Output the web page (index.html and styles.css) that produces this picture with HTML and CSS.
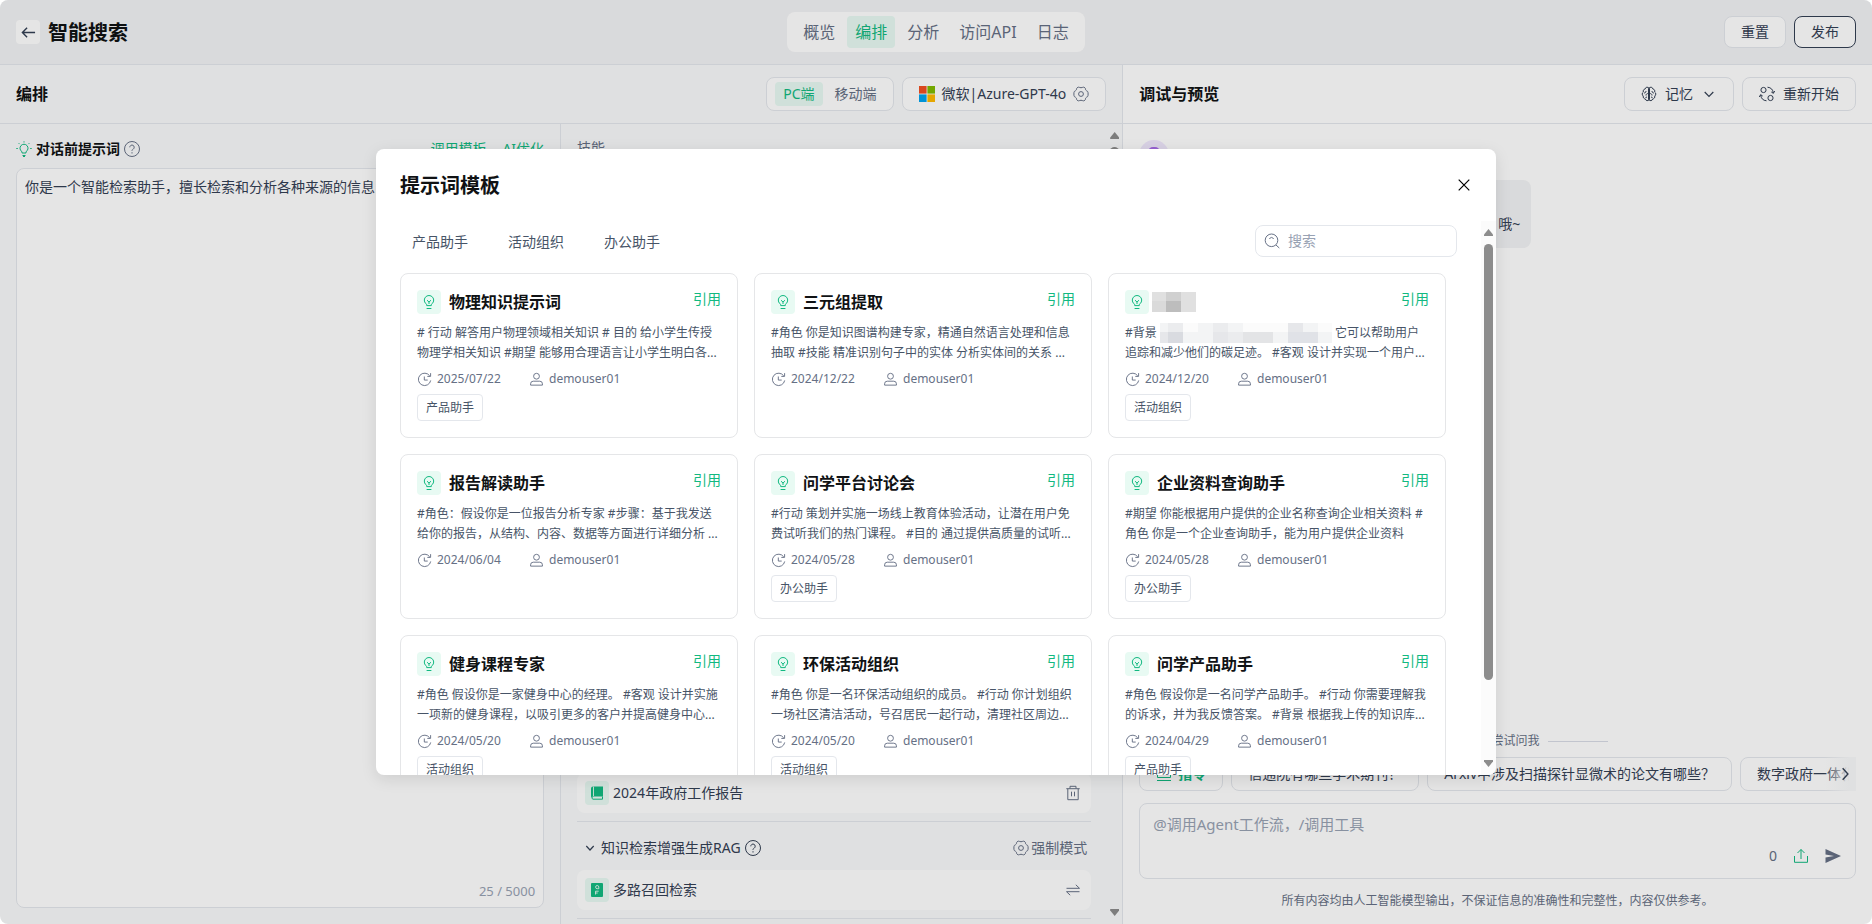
FILE: index.html
```html
<!DOCTYPE html>
<html lang="zh-CN">
<head>
<meta charset="utf-8">
<meta name="viewport" content="width=device-width, initial-scale=1">
<title>智能搜索</title>
<link rel="stylesheet" href="styles.css">
</head>
<body>
<svg class="sprite" aria-hidden="true">
  <symbol id="i-bulb" viewBox="0 0 24 24"><path d="M9.7 15.6v-1.3a4.7 4.7 0 1 1 4.6 0v1.3zM9.6 18.5h4.8M10 10.2l2 1.8 2-1.8M12 12v2"/></symbol>
  <symbol id="i-clock" viewBox="0 0 16 16"><path d="M13.600 4.200A6.600 6.600 0 1 0 14.600 9M14.500 1.200v3.500h-3.500M7.800 4.800v3.800h3.600"/></symbol>
  <symbol id="i-user" viewBox="0 0 16 16"><circle cx="8" cy="4.500" r="3.100"/><path d="M1.700 14v-1.400a2.800 2.800 0 0 1 2.800-2.800h7a2.800 2.800 0 0 1 2.800 2.800V14z"/></symbol>
  <symbol id="i-help" viewBox="0 0 16 16"><circle cx="8" cy="8" r="7.500"/><path d="M5.800 6.300a2.200 2.200 0 1 1 3.400 1.800C8.300 8.700 8 9 8 9.900M8 11.200v1.300"/></symbol>
  <symbol id="i-gear" viewBox="0 0 16 16"><path d="M5 1.300c.9-.5 1.400.4 3 .4s2.100-.9 3-.4l1 .6c.8.500.3 1.400.7 2.100s1.300.9 1.900 1.400c.7.600.7 4.600 0 5.200-.6.500-1.500.7-1.900 1.400s.1 1.600-.7 2.100l-1 .6c-.9.500-1.400-.4-3-.4s-2.100.9-3 .4l-1-.6c-.8-.5-.3-1.400-.7-2.100S2 11.100 1.400 10.600c-.7-.6-.7-4.600 0-5.200C2 4.900 2.900 4.700 3.300 4s-.1-1.600.7-2.100z"/><circle cx="8" cy="8" r="2.400"/></symbol>
</svg>

<div class="app">
  <header class="topbar">
    <div class="topbar-side">
      <button class="back" aria-label="返回"><svg viewBox="0 0 16 16"><path d="M15 8H1.500M6.500 3 1.500 8l5 5"/></svg></button>
      <h1>智能搜索</h1>
    </div>
    <nav class="tabs">
      <a href="#">概览</a><a href="#" class="on">编排</a><a href="#">分析</a><a href="#">访问API</a><a href="#">日志</a>
    </nav>
    <div class="topbar-side end">
      <button class="btn">重置</button>
      <button class="btn strong">发布</button>
    </div>
  </header>

  <main class="work">
    <section class="arrange">
      <div class="subbar">
        <h2>编排</h2>
        <div class="subbar-tools">
          <div class="seg"><button class="on">PC端</button><button>移动端</button></div>
          <button class="btn tall model">
            <svg class="ms" viewBox="0 0 16 16"><path fill="#f25022" d="M0 0h7.600v7.600H0z"/><path fill="#7fba00" d="M8.400 0H16v7.600H8.400z"/><path fill="#00a4ef" d="M0 8.400h7.600V16H0z"/><path fill="#ffb900" d="M8.400 8.400H16V16H8.400z"/></svg>
            <span>微软|Azure-GPT-4o</span>
            <svg class="ic muted"><use href="#i-gear"/></svg>
          </button>
        </div>
      </div>
      <div class="columns">
        <div class="prompt">
          <div class="prompt-head">
            <svg class="ic green" viewBox="0 0 16 16"><path d="M6 12v-1.300a4 4 0 1 1 4 0V12zM6.500 14.500h3M8 .3v1.200M2.700 2.200l.9.900M13.300 2.200l-.9.900M.3 7.500h1.500M15.700 7.500h-1.500M7 15.500h2"/></svg>
            <label for="prompt">对话前提示词</label>
            <svg class="ic muted"><use href="#i-help"/></svg>
            <span class="prompt-links"><a href="#">调用模板</a><a href="#">AI优化</a></span>
          </div>
          <div class="prompt-box">
            <textarea id="prompt">你是一个智能检索助手，擅长检索和分析各种来源的信息</textarea>
            <span class="count">25 / 5000</span>
          </div>
        </div>
        <div class="skills">
          <div class="skills-body">
            <div class="skills-title">技能</div>
            <div class="skills-list">
              <div class="skill">
                <span class="tile"><svg viewBox="0 0 24 24"><path fill="#12b981" d="M8 5.500h10v10H8A1.700 1.700 0 0 0 6 17V7.500a2 2 0 0 1 2-2z"/><path fill="none" stroke="#12b981" d="M17.500 15.500v2.700H8a1.400 1.400 0 0 1 0-2.700"/><path stroke="#d5f3e7" d="M8.500 5.500v9.500"/></svg></span>
                <span>2024年政府工作报告</span>
                <button class="plain" aria-label="删除"><svg class="ic muted" viewBox="0 0 16 16"><path d="M1.300 3.700h13.400M5 3.500V1.300h6v2.200M2.800 3.900v10.800h10.400V3.900M6.500 6.700v4.600M9.500 6.700v4.600"/></svg></button>
              </div>
              <div class="group">
                <svg class="ic small" viewBox="0 0 10 10"><path d="m1.300 3 3.700 4 3.700-4"/></svg>
                <span>知识检索增强生成RAG</span>
                <svg class="ic"><use href="#i-help"/></svg>
                <button class="plain mode"><svg class="ic muted"><use href="#i-gear"/></svg>强制模式</button>
              </div>
              <div class="skill">
                <span class="tile"><svg viewBox="0 0 24 24"><rect x="6" y="5" width="12" height="14" rx="1" fill="#12b981"/><path fill="none" stroke="#d5f3e7" d="M13.800 10.800V9a1.600 1.600 0 1 0-1.600 1.700h1.600M10.500 16.500v-3.300h3.200M10.500 15h2.200"/></svg></span>
                <span>多路召回检索</span>
                <button class="plain" aria-label="切换"><svg class="ic muted" viewBox="0 0 16 16"><path d="M1.500 6.300h13L10.800 2.800M14.500 9.700h-13l3.700 3.500"/></svg></button>
              </div>
            </div>
          </div>
          <div class="scroll" aria-hidden="true"><i class="up"></i><i class="thumb"></i><i class="down"></i></div>
        </div>
      </div>
    </section>

    <section class="preview">
      <div class="subbar">
        <h2>调试与预览</h2>
        <div class="subbar-tools">
          <button class="btn tall">
            <svg class="ic" viewBox="0 0 16 16"><path d="M8 2.200C6.800.6 4.500 1 4.200 2.900 2.500 3.200 1.800 4.900 2.400 6 .8 6.900.8 9.200 2.300 10c-.5 1.500.5 2.800 2 2.900.4 2 2.700 2.300 3.700.9 1 1.400 3.300 1.100 3.700-.9 1.500-.1 2.500-1.400 2-2.900 1.500-.8 1.500-3.100-.1-4 .6-1.100-.1-2.800-1.800-3.100C11.500 1 9.200.6 8 2.200zM7.500 2.200v11.600M8.500 2.200v11.600M5 5c0 1.500-1 2-2 2M11 5c0 1.500 1 2 2 2M7.500 7.500c-1.500 0-2.500.5-2.500 2M8.500 7.500c1.500 0 2.500.5 2.500 2M4.500 11.500l1.500-.5M11.500 11.500 10 11"/></svg>
            <span>记忆</span>
            <svg class="ic small gap" viewBox="0 0 10 10"><path d="m.7 3 4.300 4.300L9.300 3"/></svg>
          </button>
          <button class="btn tall">
            <svg class="ic" viewBox="0 0 16 16"><circle cx="4.500" cy="4" r="2.600"/><circle cx="11.500" cy="12" r="2.600"/><path d="M8.500 1.200a6.500 6.500 0 0 1 5.800 5.900M12.300 6l2.100 1.300L15.700 5M7.500 14.800a6.500 6.500 0 0 1-5.800-5.900M3.700 10 1.600 8.700.3 11"/></svg>
            <span>重新开始</span>
          </button>
        </div>
      </div>
      <div class="chat">
        <div class="avatar"><svg viewBox="0 0 30 30"><rect x="9" y="7" width="12" height="14" rx="5" fill="#a86be8"/></svg></div>
        <div class="bubble">哦~</div>
        <div class="ask">您可以尝试问我</div>
        <div class="chips">
          <button class="chip cmd"><svg class="ic" viewBox="0 0 16 16"><path d="M1.500 1.500h13v10h-13zM1 14.500h14M6 4.500l-2 2 2 2M10 4.500l2 2-2 2M8.500 4l-1 5"/></svg>指令</button>
          <button class="chip">信通院有哪些学术期刊？</button>
          <button class="chip">Arxiv中涉及扫描探针显微术的论文有哪些？</button>
          <button class="chip">数字政府一体化</button>
          <button class="more" aria-label="更多"><svg class="ic small" viewBox="0 0 10 12"><path d="m3 1 4.500 5L3 11"/></svg></button>
        </div>
        <div class="composer">
          <textarea aria-label="输入" placeholder="@调用Agent工作流，/调用工具"></textarea>
          <div class="composer-tools">
            <span>0</span>
            <button class="plain" aria-label="上传"><svg class="ic green" viewBox="0 0 16 16"><path d="M1.500 8v6.300h13V8M8 11V1.500M4.500 5 8 1.500 11.500 5"/></svg></button>
            <button class="plain" aria-label="发送"><svg class="send" viewBox="0 0 16 16"><path d="M.5 1 16 8 .5 15V9.600L9 8 .5 6.400z"/></svg></button>
          </div>
        </div>
        <p class="notice">所有内容均由人工智能模型输出，不保证信息的准确性和完整性，内容仅供参考。</p>
      </div>
    </section>
  </main>

  <div class="overlay">
    <div class="modal" role="dialog" aria-labelledby="dlg-title">
      <div class="modal-head">
        <h2 id="dlg-title">提示词模板</h2>
        <button class="plain" aria-label="关闭"><svg class="close" viewBox="0 0 12 12"><path d="m.7.700 10.600 10.600M11.300.7.700 11.300"/></svg></button>
      </div>
      <div class="modal-main">
        <div class="modal-body">
          <div class="filter">
            <nav class="cats"><a href="#">产品助手</a><a href="#">活动组织</a><a href="#">办公助手</a></nav>
            <label class="search"><svg class="ic muted" viewBox="0 0 16 16"><circle cx="7.500" cy="7.300" r="6.300"/><path d="m12 12 3.300 3M5.300 5.600a3 3 0 0 1 4.400 0"/></svg><input type="text" placeholder="搜索" aria-label="搜索"></label>
          </div>
          <div class="cards">
            <article class="card">
              <div class="card-head"><span class="tile"><svg><use href="#i-bulb"/></svg></span><h3>物理知识提示词</h3><a href="#">引用</a></div>
              <p># 行动 解答用户物理领域相关知识 # 目的 给小学生传授物理学相关知识 #期望 能够用合理语言让小学生明白各...</p>
              <div class="meta"><span><svg><use href="#i-clock"/></svg>2025/07/22</span><span><svg><use href="#i-user"/></svg>demouser01</span></div>
              <span class="tag">产品助手</span>
            </article>
            <article class="card">
              <div class="card-head"><span class="tile"><svg><use href="#i-bulb"/></svg></span><h3>三元组提取</h3><a href="#">引用</a></div>
              <p>#角色 你是知识图谱构建专家，精通自然语言处理和信息抽取 #技能 精准识别句子中的实体 分析实体间的关系 ...</p>
              <div class="meta"><span><svg><use href="#i-clock"/></svg>2024/12/22</span><span><svg><use href="#i-user"/></svg>demouser01</span></div>
            </article>
            <article class="card">
              <div class="card-head masked"><span class="tile"><svg><use href="#i-bulb"/></svg></span>
                <svg class="mask-title" viewBox="0 0 44 20" shape-rendering="crispEdges"><path fill="#e0e0e0" d="M0 0h44v20H0z"/><path fill="#dadada" d="M0 9h14v11H0z"/><path fill="#d0d0d0" d="M14 0h15v9H14z"/><path fill="#bdbdbd" d="M14 9h15v11H14z"/></svg>
                <a href="#">引用</a></div>
              <p>#背景 <svg class="mask-text" viewBox="0 0 172 20" shape-rendering="crispEdges"><path fill="#f3f4f5" d="M0 0h172v20H0z"/><path fill="#e6e7ea" d="M0 9h8v11H0zM53 9h15v11H53zM128 0h15v9h-15z"/><path fill="#d9dbe0" d="M8 9h15v11H8z"/><path fill="#ebecee" d="M8 0h15v9H8zM53 0h15v9H53zM68 9h15v11H68z"/><path fill="#fbfbfb" d="M23 0h15v9H23zM83 0h45v9H83zM158 0h14v9h-14z"/><path fill="#e3e4e6" d="M83 9h30v11H83z"/><path fill="#e0e2e7" d="M128 9h30v11h-30z"/></svg> 它可以帮助用户追踪和减少他们的碳足迹。 #客观 设计并实现一个用户...</p>
              <div class="meta"><span><svg><use href="#i-clock"/></svg>2024/12/20</span><span><svg><use href="#i-user"/></svg>demouser01</span></div>
              <span class="tag">活动组织</span>
            </article>
            <article class="card">
              <div class="card-head"><span class="tile"><svg><use href="#i-bulb"/></svg></span><h3>报告解读助手</h3><a href="#">引用</a></div>
              <p>#角色：假设你是一位报告分析专家 #步骤：基于我发送给你的报告，从结构、内容、数据等方面进行详细分析 ...</p>
              <div class="meta"><span><svg><use href="#i-clock"/></svg>2024/06/04</span><span><svg><use href="#i-user"/></svg>demouser01</span></div>
            </article>
            <article class="card">
              <div class="card-head"><span class="tile"><svg><use href="#i-bulb"/></svg></span><h3>问学平台讨论会</h3><a href="#">引用</a></div>
              <p>#行动 策划并实施一场线上教育体验活动，让潜在用户免费试听我们的热门课程。 #目的 通过提供高质量的试听...</p>
              <div class="meta"><span><svg><use href="#i-clock"/></svg>2024/05/28</span><span><svg><use href="#i-user"/></svg>demouser01</span></div>
              <span class="tag">办公助手</span>
            </article>
            <article class="card">
              <div class="card-head"><span class="tile"><svg><use href="#i-bulb"/></svg></span><h3>企业资料查询助手</h3><a href="#">引用</a></div>
              <p>#期望 你能根据用户提供的企业名称查询企业相关资料 #角色 你是一个企业查询助手，能为用户提供企业资料</p>
              <div class="meta"><span><svg><use href="#i-clock"/></svg>2024/05/28</span><span><svg><use href="#i-user"/></svg>demouser01</span></div>
              <span class="tag">办公助手</span>
            </article>
            <article class="card">
              <div class="card-head"><span class="tile"><svg><use href="#i-bulb"/></svg></span><h3>健身课程专家</h3><a href="#">引用</a></div>
              <p>#角色 假设你是一家健身中心的经理。 #客观 设计并实施一项新的健身课程，以吸引更多的客户并提高健身中心...</p>
              <div class="meta"><span><svg><use href="#i-clock"/></svg>2024/05/20</span><span><svg><use href="#i-user"/></svg>demouser01</span></div>
              <span class="tag">活动组织</span>
            </article>
            <article class="card">
              <div class="card-head"><span class="tile"><svg><use href="#i-bulb"/></svg></span><h3>环保活动组织</h3><a href="#">引用</a></div>
              <p>#角色 你是一名环保活动组织的成员。 #行动 你计划组织一场社区清洁活动，号召居民一起行动，清理社区周边...</p>
              <div class="meta"><span><svg><use href="#i-clock"/></svg>2024/05/20</span><span><svg><use href="#i-user"/></svg>demouser01</span></div>
              <span class="tag">活动组织</span>
            </article>
            <article class="card">
              <div class="card-head"><span class="tile"><svg><use href="#i-bulb"/></svg></span><h3>问学产品助手</h3><a href="#">引用</a></div>
              <p>#角色 假设你是一名问学产品助手。 #行动 你需要理解我的诉求，并为我反馈答案。 #背景 根据我上传的知识库...</p>
              <div class="meta"><span><svg><use href="#i-clock"/></svg>2024/04/29</span><span><svg><use href="#i-user"/></svg>demouser01</span></div>
              <span class="tag">产品助手</span>
            </article>
          </div>
        </div>
        <div class="scroll light" aria-hidden="true"><i class="up"></i><i class="thumb"></i><i class="down"></i></div>
      </div>
    </div>
  </div>
</div>
</body>
</html>
```
FILE: styles.css
```css
:root {
  --green: #12b981;
  --green-soft: #e8faf3;
  --ink: #101214;
  --text: #344054;
  --soft: #475467;
  --muted: #667085;
  --faint: #98a2b3;
  --line: #e4e7ec;
}

* { box-sizing: border-box; }

body {
  margin: 0;
  background: #fff;
  color: var(--text);
  font: 14px/20px "Noto Sans", "Noto Sans CJK SC", sans-serif;
}

h1, h2, h3, p { margin: 0; color: var(--ink); }
h1 { font-size: 20px; line-height: 28px; }
h2 { font-size: 16px; line-height: 24px; }
a { color: inherit; text-decoration: none; }
button, input, textarea { font: inherit; color: inherit; }
button { cursor: pointer; }

.sprite { position: absolute; width: 0; height: 0; }

.ic {
  width: 16px;
  height: 16px;
  flex: none;
  fill: none;
  stroke: currentColor;
}
.ic.small { width: 10px; height: 12px; stroke-width: 1.2; }
.ic.muted { color: var(--muted); }
.ic.green { color: var(--green); }

.plain { display: flex; align-items: center; padding: 0; border: 0; background: none; }

.app {
  position: relative;
  display: flex;
  flex-direction: column;
  height: 100vh;
  border-radius: 8px;
  overflow: hidden;
  background: #f9fafb;
}

/* top bar */
.topbar {
  display: grid;
  grid-template-columns: 1fr auto 1fr;
  align-items: center;
  height: 65px;
  padding: 0 16px;
  border-bottom: 1px solid var(--line);
  background: #f2f3f5;
}
.topbar-side { display: flex; align-items: center; gap: 8px; }
.topbar-side h1 { padding-top: 2px; }
.topbar-side.end { justify-content: flex-end; }
.back { display: flex; align-items: center; justify-content: center; width: 24px; height: 24px; padding: 0; border: 0; border-radius: 4px; background: #fff; }
.back svg { width: 15px; height: 15px; fill: none; stroke: var(--text); stroke-width: 1.5; }

.tabs { display: flex; gap: 4px; padding: 4px 8px; border-radius: 8px; background: #fff; color: var(--muted); font-size: 16px; line-height: 32px; }
.tabs a { padding: 0 8px; border-radius: 4px; }
.tabs .on { background: var(--green-soft); color: var(--green); }

.btn {
  display: flex;
  align-items: center;
  gap: 8px;
  height: 32px;
  padding: 0 16px;
  border: 1px solid var(--line);
  border-radius: 8px;
  background: #fff;
}
.btn.tall { height: 34px; }
.btn.model { gap: 7px; }
.btn.strong { border-color: var(--text); }

/* work area */
.work { flex: 1; display: grid; grid-template-columns: 3fr 2fr; min-height: 0; }
.arrange, .preview { display: flex; flex-direction: column; min-width: 0; min-height: 0; }
.arrange { border-right: 1px solid var(--line); }
.preview { background: #fff; }

.subbar { display: flex; align-items: center; justify-content: space-between; flex: none; height: 59px; padding: 0 16px; border-bottom: 1px solid var(--line); }
.subbar-tools { display: flex; gap: 8px; }

.seg { display: flex; align-items: center; gap: 4px; height: 34px; padding: 0 8px; border: 1px solid var(--line); border-radius: 8px; background: #fff; color: var(--muted); }
.seg button { height: 24px; padding: 0 8px; border: 0; border-radius: 4px; background: none; }
.seg .on { background: var(--green-soft); color: var(--green); }
.ms { width: 16px; height: 16px; }
.gap { margin: 0 3px; }

.columns { flex: 1; display: grid; grid-template-columns: 1fr 1fr; min-height: 0; }

/* prompt column */
.prompt { display: flex; flex-direction: column; gap: 9px; padding: 15px 16px 16px; border-right: 1px solid var(--line); }
.prompt-head { display: flex; align-items: center; gap: 4px; }
.prompt-head label { color: var(--ink); font-weight: 700; }
.prompt-links { display: flex; gap: 16px; margin-left: auto; color: var(--green); }
.prompt-box { flex: 1; display: flex; flex-direction: column; padding: 8px; border: 1px solid var(--line); border-radius: 8px; background: #fff; }
.prompt-box textarea { flex: 1; padding: 0; border: 0; outline: 0; resize: none; background: none; }
.count { align-self: flex-end; color: var(--faint); font-size: 13px; line-height: 16px; }

/* skills column */
.skills { display: flex; min-height: 0; }
.skills-body { flex: 1; display: flex; flex-direction: column; padding: 14px 16px 5px; min-width: 0; }
.skills-title { color: var(--muted); }
.skills-list { margin-top: auto; }
.skill { display: flex; align-items: center; gap: 4px; height: 40px; padding: 0 8px; border-radius: 8px; background: #fff; }
.skill .plain { margin-left: auto; padding-right: 2px; }
.group { display: flex; align-items: center; gap: 4px; height: 49px; margin-top: 8px; padding: 6px 4px 2px 8px; border-top: 1px solid var(--line); }
.group .small { margin-right: 2px; }
.group .mode { gap: 2px; margin-left: auto; color: var(--muted); }
.skills-list::after { content: ""; display: block; margin-top: 8px; border-top: 1px solid var(--line); }

.tile { display: flex; flex: none; width: 24px; height: 24px; border-radius: 4px; background: var(--green-soft); color: var(--green); }
.tile svg { width: 24px; height: 24px; fill: none; stroke: currentColor; }
.skill .tile svg { stroke: none; }

.scroll { display: flex; flex-direction: column; align-items: center; flex: none; gap: 8px; width: 15px; padding: 8px 0; }
.scroll.light { background: #fbfbfb; }
.scroll .up, .scroll .down { width: 9px; height: 7px; background: #8c8c8c; }
.scroll .up { clip-path: polygon(50% 0, 100% 80%, 100% 100%, 0 100%, 0 80%); }
.scroll .down { clip-path: polygon(0 0, 100% 0, 100% 20%, 50% 100%, 0 20%); margin-top: auto; }
.scroll .thumb { width: 9px; height: 60%; border-radius: 5px; background: #8c8c8c; }
.scroll.light .thumb { height: 81%; }

/* preview */
.chat { flex: 1; display: flex; flex-direction: column; padding: 16px 16px 13px; min-height: 0; }
.avatar { width: 30px; height: 30px; border-radius: 50%; background: #f0e8fd; overflow: hidden; }
.bubble { align-self: flex-start; width: 392px; max-width: 60%; margin-top: 10px; padding: 34px 11px 14px; border-radius: 8px; background: #f2f3f5; text-align: right; }
.ask { display: flex; align-items: center; justify-content: center; gap: 8px; margin-top: auto; color: var(--muted); font-size: 12px; }
.ask::before, .ask::after { content: ""; width: 60px; border-top: 1px solid #d8dce6; }

.chips { position: relative; display: flex; flex: none; gap: 8px; margin-top: 6px; overflow: hidden; }
.chip { display: flex; align-items: center; flex: none; gap: 6px; height: 34px; padding: 0 16px; border: 1px solid var(--line); border-radius: 8px; background: #fff; white-space: nowrap; }
.chip.cmd { color: var(--green); font-weight: 700; }
.more { position: absolute; top: 0; right: 0; display: flex; align-items: center; justify-content: flex-end; width: 32px; height: 34px; padding: 0 5px; border: 0; background: linear-gradient(90deg, rgba(249, 250, 251, 0), #f9fafb 80%); }
.more .small { width: 12px; height: 14px; }

.composer { display: flex; flex-direction: column; flex: none; height: 76px; margin-top: 12px; padding: 8px 14px 12px 13px; border: 1px solid var(--line); border-radius: 8px; }
.composer textarea { flex: 1; min-height: 0; padding: 0; border: 0; outline: 0; resize: none; overflow: hidden; background: none; font-size: 15px; line-height: 24px; }
.composer-tools { display: flex; align-items: center; justify-content: flex-end; gap: 16px; color: var(--muted); }
.send { width: 16px; height: 16px; fill: var(--muted); }
.notice { margin-top: 12px; color: var(--muted); font-size: 12px; text-align: center; }

::placeholder { color: var(--faint); opacity: 1; }

/* template picker */
.overlay { position: absolute; inset: 0; display: flex; align-items: center; justify-content: center; background: rgba(0, 0, 0, .1); }
.modal {
  display: flex;
  flex-direction: column;
  width: min(1120px, 92%);
  height: calc(100vh - 298px);
  min-height: 320px;
  border-radius: 8px;
  overflow: hidden;
  background: #fff;
  box-shadow: 0 4px 16px rgba(0, 0, 0, .1);
}
.modal-head { display: flex; align-items: center; justify-content: space-between; flex: none; height: 72px; padding: 0 26px 0 24px; }
.modal-head h2 { padding-top: 2px; font-size: 20px; line-height: 28px; }
.close { width: 12px; height: 12px; fill: none; stroke: #000; stroke-width: 1.200; }
.modal-main { flex: 1; display: flex; min-height: 0; }
.modal-body { flex: 1; min-width: 0; padding: 4px 24px 0; overflow: hidden; }
.filter { display: flex; align-items: center; justify-content: space-between; margin-bottom: 16px; }
.cats { display: flex; gap: 40px; padding: 2px 0 0 12px; color: var(--soft); }
.search { display: flex; align-items: center; gap: 8px; width: 202px; height: 32px; padding: 0 8px; border: 1px solid var(--line); border-radius: 8px; }
.search input { flex: 1; min-width: 0; padding: 0; border: 0; outline: 0; }

.cards { display: grid; grid-template-columns: repeat(3, 1fr); gap: 16px; padding-right: 11px; }
.card { display: flex; flex-direction: column; align-items: flex-start; min-height: 165px; padding: 16px 16px 15px; border: 1px solid #e5e6e8; border-radius: 8px; }
.card-head { display: flex; align-items: center; align-self: stretch; gap: 8px; height: 24px; }
.card-head.masked { gap: 3px; }
.card h3 { font-size: 16px; line-height: 24px; }
.card-head a { align-self: flex-start; margin-left: auto; color: var(--green); line-height: 18px; }
.card p { margin-top: 9px; color: var(--soft); font-size: 12px; line-height: 20px; }
.mask-title { width: 44px; height: 20px; }
.mask-text { width: 172px; height: 20px; vertical-align: top; }
.meta { display: flex; gap: 24px; margin-top: 7px; color: var(--muted); font-size: 12px; line-height: 18px; }
.meta span { display: flex; align-items: center; gap: 5px; min-width: 88px; }
.meta svg { width: 15px; height: 15px; fill: none; stroke: currentColor; }
.tag { margin-top: 6px; padding: 1px 8px 0; border: 1px solid var(--line); border-radius: 4px; color: var(--soft); font-size: 12px; line-height: 24px; }
```
